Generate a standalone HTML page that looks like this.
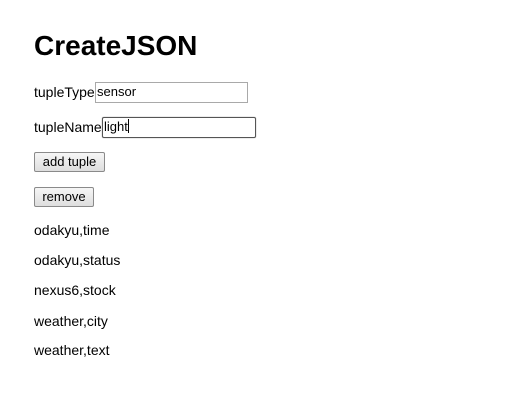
<!DOCTYPE html>
<html><head><style>
body{margin:0;width:519px;height:402px;background:#fff;font-family:"Liberation Sans",Arial,sans-serif;font-size:14px;color:#000;position:relative;overflow:hidden}
.a{position:absolute;white-space:nowrap}
h1{position:absolute;left:34px;top:29px;margin:0;font-size:28px;font-weight:bold;line-height:34px}
.in{position:absolute;box-sizing:border-box;background:#fff;font-size:13px;line-height:18px;padding-left:1px}
.btn{position:absolute;box-sizing:border-box;border:1px solid #8a8a8a;border-radius:2px;background:linear-gradient(#f6f6f6,#dedede);font-size:13px;text-align:center;line-height:17px}
</style></head><body>
<h1>CreateJSON</h1>
<div class="a" style="left:34px;top:84px">tupleType</div>
<div class="in" style="left:95px;top:82px;width:153px;height:21px;border:1px solid #a9a9a9">sensor</div>
<div class="a" style="left:34px;top:119px">tupleName</div>
<div class="in" style="left:102px;top:117px;width:154px;height:21px;border:1px solid #555;border-radius:2px;box-shadow:0 0 1px #888">light<span style="display:inline-block;width:1px;height:14px;background:#000;vertical-align:-2px"></span></div>
<div class="btn" style="left:34px;top:152px;width:71px;height:20px">add tuple</div>
<div class="btn" style="left:34px;top:187px;width:60px;height:20px">remove</div>
<div class="a" style="left:34px;top:222px">odakyu,time</div>
<div class="a" style="left:34px;top:252px">odakyu,status</div>
<div class="a" style="left:34px;top:282px">nexus6,stock</div>
<div class="a" style="left:34px;top:313px">weather,city</div>
<div class="a" style="left:34px;top:342px">weather,text</div>
</body></html>
